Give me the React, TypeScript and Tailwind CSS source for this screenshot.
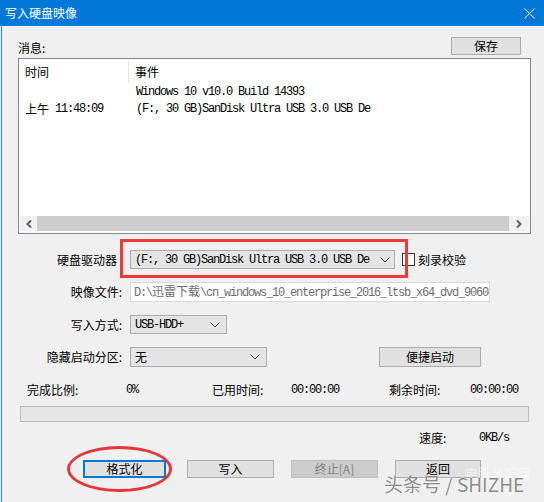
import React from "react";

const cjk = { fontFamily: '"Noto Sans CJK SC", "Microsoft YaHei", sans-serif' };
const mono = { fontFamily: '"Liberation Mono", "Noto Sans CJK SC", monospace' };

function Chevron() {
  return (
    <svg width="10" height="6" viewBox="0 0 10 6" className="shrink-0">
      <polyline points="0.5,0.5 5,5 9.5,0.5" fill="none" stroke="#444" strokeWidth="1" />
    </svg>
  );
}

function Mono({ children, className = "" }: { children: React.ReactNode; className?: string }) {
  return (
    <span style={mono} className={"text-[12px] tracking-[-1.2px] whitespace-nowrap " + className}>
      {children}
    </span>
  );
}

function Btn({ w, label, focused, disabled }: { w: string; label: string; focused?: boolean; disabled?: boolean }) {
  return (
    <div
      className={
        "h-[18px] flex items-center justify-center text-[12px] leading-none " +
        w +
        (focused
          ? " border-2 border-[#0078d7] bg-[#e1e1e1] text-black"
          : disabled
          ? " border border-[#bfbfbf] bg-[#cccccc] text-[#838383]"
          : " border border-[#adadad] bg-[#e1e1e1] text-black")
      }
      style={cjk}
    >
      {label}
    </div>
  );
}

export default function App() {
  return (
    <div className="relative w-[544px] h-[502px] bg-[#f0f0f0] overflow-hidden text-black" style={cjk}>
      {/* title bar */}
      <div className="h-[26px] bg-[#0078d7] flex items-center justify-between pl-[5px] pr-[9px]">
        <span className="text-white text-[12px]">写入硬盘映像</span>
        <svg width="11" height="11" viewBox="0 0 11 11">
          <line x1="0.5" y1="0.5" x2="10.5" y2="10.5" stroke="#fff" strokeWidth="1" />
          <line x1="10.5" y1="0.5" x2="0.5" y2="10.5" stroke="#fff" strokeWidth="1" />
        </svg>
      </div>

      <div className="flex">
        <div className="w-[1px] bg-[#2b7fd6] h-[476px] ml-[1px]" />
        <div className="flex-1 flex flex-col">
          {/* message row */}
          <div className="mt-[11px] h-[18px] flex items-end justify-between pl-[16px] pr-[23px]">
            <span className="text-[12px] leading-[14px]">消息:</span>
            <Btn w="w-[70px]" label="保存" />
          </div>

          {/* log box */}
          <div className="mt-[3px] ml-[16px] w-[513px] h-[176px] border border-[#828790] bg-white flex flex-col">
            <div className="h-[25px] flex items-center text-[12px]">
              <div className="w-[110px] h-[22px] pl-[6px] flex items-center border-r border-[#e5e5e5]">时间</div>
              <div className="pl-[6px]">事件</div>
            </div>
            <div className="h-[16px] flex items-center">
              <div className="w-[117px]" />
              <Mono>Windows 10 v10.0 Build 14393</Mono>
            </div>
            <div className="h-[17px] flex items-center">
              <div className="w-[117px] pl-[6px] flex items-center">
                <span className="text-[12px]">上午</span>
                <Mono className="ml-[6px]">11:48:09</Mono>
              </div>
              <Mono>(F:, 30 GB)SanDisk Ultra USB 3.0 USB De</Mono>
            </div>
            <div className="flex-1" />
            <div className="h-[15px] mx-[1px] mb-[2px] flex bg-[#cdcdcd]">
              <div className="w-[17px] bg-[#f0f0f0] flex items-center justify-center">
                <svg width="6" height="8" viewBox="0 0 6 8">
                  <polyline points="5,0.5 1.5,4 5,7.5" fill="none" stroke="#606060" strokeWidth="2" />
                </svg>
              </div>
              <div className="flex-1" />
              <div className="w-[20px] bg-[#f0f0f0] flex items-center justify-center">
                <svg width="6" height="8" viewBox="0 0 6 8">
                  <polyline points="1,0.5 4.5,4 1,7.5" fill="none" stroke="#606060" strokeWidth="2" />
                </svg>
              </div>
            </div>
          </div>

          {/* drive row */}
          <div className="mt-[16px] h-[19px] flex items-center">
            <div className="w-[128px] text-right pr-[13px] text-[12px]">硬盘驱动器</div>
            <div className="w-[265px] h-[19px] border border-[#acacac] bg-[#e5e5e5] flex items-center justify-between pl-[4px] pr-[4px]">
              <Mono>(F:, 30 GB)SanDisk Ultra USB 3.0 USB De</Mono>
              <Chevron />
            </div>
            <div className="ml-[7px] w-[13px] h-[13px] border border-[#333] bg-white" />
            <span className="ml-[3px] text-[12px]">刻录校验</span>
          </div>

          {/* file row */}
          <div className="mt-[13px] h-[20px] flex items-center">
            <div className="w-[128px] text-right pr-[8px] text-[12px]">映像文件:</div>
            <div className="w-[360px] h-[20px] border border-[#d9d9d9] bg-white flex items-center pl-[3px] overflow-hidden text-[#6d6d6d]">
              <Mono>
                D:\<span className="tracking-normal" style={cjk}>迅雷下载</span>\cn_windows_10_enterprise_2016_ltsb_x64_dvd_90604
              </Mono>
            </div>
          </div>

          {/* write mode row */}
          <div className="mt-[13px] h-[19px] flex items-center">
            <div className="w-[128px] text-right pr-[8px] text-[12px]">写入方式:</div>
            <div className="w-[97px] h-[19px] border border-[#acacac] bg-[#e5e5e5] flex items-center justify-between pl-[4px] pr-[6px]">
              <Mono>USB-HDD+</Mono>
              <Chevron />
            </div>
          </div>

          {/* hidden partition row */}
          <div className="mt-[13px] h-[20px] flex items-center">
            <div className="w-[128px] text-right pr-[8px] text-[12px]">隐藏启动分区:</div>
            <div className="w-[137px] h-[20px] border border-[#acacac] bg-[#e5e5e5] flex items-center justify-between pl-[4px] pr-[6px]">
              <span className="text-[12px]">无</span>
              <Chevron />
            </div>
            <div className="ml-[112px]">
              <Btn w="w-[102px] h-[20px]" label="便捷启动" />
            </div>
          </div>

          {/* stats row */}
          <div className="mt-[15px] h-[16px] flex items-center text-[12px] pl-[25px]">
            <span className="w-[99px]">完成比例:</span>
            <Mono className="w-[86px]">0%</Mono>
            <span className="w-[79px]">已用时间:</span>
            <Mono className="w-[98px]">00:00:00</Mono>
            <span className="w-[81px]">剩余时间:</span>
            <Mono>00:00:00</Mono>
          </div>

          {/* progress */}
          <div className="mt-[8px] ml-[18px] w-[509px] h-[16px] border border-[#bcbcbc] bg-[#e6e6e6]" />

          {/* speed */}
          <div className="mt-[8px] h-[16px] flex items-center text-[12px] pl-[417px]">
            <span className="w-[60px]">速度:</span>
            <Mono>0KB/s</Mono>
          </div>

          {/* buttons */}
          <div className="mt-[14px] flex items-center pl-[81px]">
            <Btn w="w-[83px]" label="格式化" focused />
            <div className="w-[21px]" />
            <Btn w="w-[87px]" label="写入" />
            <div className="w-[17px]" />
            <Btn w="w-[87px]" label="终止[A]" disabled />
            <div className="w-[17px]" />
            <Btn w="w-[86px]" label="返回" />
          </div>
        </div>
      </div>

      {/* annotations */}
      <div className="absolute left-[120px] top-[239px] w-[288px] h-[39px] border-[3px] border-[#f03a3a] pointer-events-none" />
      <div className="absolute left-[67px] top-[446px] w-[105px] h-[46px] rounded-[50%] border-[3px] border-[#e8343a] pointer-events-none" />

      {/* watermark */}
      <div className="absolute left-[465px] top-[465px] text-[13px] leading-[16px] text-white/50 pointer-events-none">电脑装配网</div>
      <div
        className="absolute left-[384px] top-[472px] text-[19px] leading-[24px] text-[#6a6a6a]/80 whitespace-nowrap pointer-events-none"
        style={{ textShadow: "0 0 1px #fff, 0 0 1px #fff" }}
      >
        头条号 / SHIZHE
      </div>
    </div>
  );
}
